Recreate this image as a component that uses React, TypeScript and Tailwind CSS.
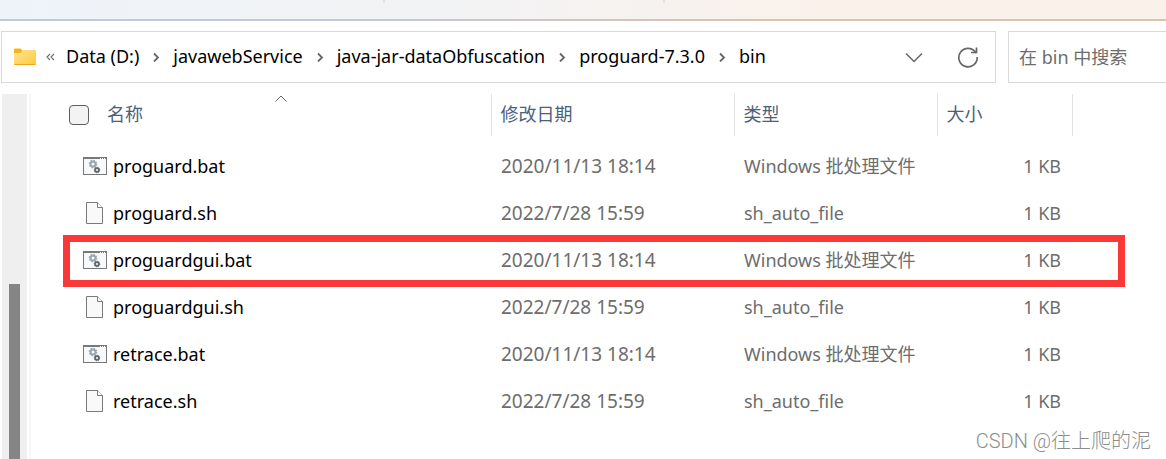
import { useState } from 'react';

type FileKind = 'bat' | 'sh';

interface FileRow {
  name: string;
  kind: FileKind;
  modified: string;
  size: string;
  marked?: boolean;
}

const PATH = ['Data (D:)', 'javawebService', 'java-jar-dataObfuscation', 'proguard-7.3.0', 'bin'];

const FILES: FileRow[] = [
  { name: 'proguard.bat', kind: 'bat', modified: '2020/11/13 18:14', size: '1 KB' },
  { name: 'proguard.sh', kind: 'sh', modified: '2022/7/28 15:59', size: '1 KB' },
  { name: 'proguardgui.bat', kind: 'bat', modified: '2020/11/13 18:14', size: '1 KB', marked: true },
  { name: 'proguardgui.sh', kind: 'sh', modified: '2022/7/28 15:59', size: '1 KB' },
  { name: 'retrace.bat', kind: 'bat', modified: '2020/11/13 18:14', size: '1 KB' },
  { name: 'retrace.sh', kind: 'sh', modified: '2022/7/28 15:59', size: '1 KB' },
];

const TYPE_LABEL: Record<FileKind, string> = {
  bat: 'Windows 批处理文件',
  sh: 'sh_auto_file',
};

function FolderIcon() {
  return (
    <svg width="22" height="18" viewBox="0 0 22 18" className="shrink-0">
      <defs>
        <linearGradient id="folder" x1="0" y1="0" x2="1" y2="1">
          <stop offset="0" stopColor="#ffe599" />
          <stop offset="1" stopColor="#ffc937" />
        </linearGradient>
      </defs>
      <path d="M0 1.5Q0 0.5 1 0.5H6.5L8.5 2.5H21Q22 2.5 22 3.5V8H0z" fill="#f7b51c" />
      <path d="M0 5H6.5L8.5 2.5H21Q22 2.5 22 3.5V16Q22 17 21 17H1Q0 17 0 16z" fill="url(#folder)" />
      <path d="M0.5 16.5H21.5" stroke="#e9a51d" />
    </svg>
  );
}

function BatIcon() {
  return (
    <svg width="24" height="18" viewBox="0 0 24 18">
      <rect x="0.5" y="0.5" width="23" height="17" fill="#f8f9fa" stroke="#787878" />
      <path d="M0 1H24" stroke="#787878" strokeWidth="2" />
      <path d="M17 1.5h1M19 1.5h1M21 1.5h1" stroke="#fff" />
      <circle cx="10" cy="7" r="2.5" fill="none" stroke="#9ba5ae" strokeWidth="2" />
      <circle cx="10" cy="7" r="3.7" fill="none" stroke="#9ba5ae" strokeWidth="1.2" strokeDasharray="1.5 1.4" />
      <circle cx="14" cy="13" r="1.9" fill="none" stroke="#5c666d" strokeWidth="1.7" />
      <circle cx="14" cy="13" r="2.8" fill="none" stroke="#5c666d" strokeWidth="1" strokeDasharray="1.2 1" />
    </svg>
  );
}

function PageIcon() {
  return (
    <svg width="18" height="22" viewBox="0 0 18 22">
      <path d="M0.5 0.5H11.5L16.5 5.5V21.5H0.5z" fill="#f9f9f9" stroke="#7a7a7a" />
      <path d="M11.5 0.5V5.5H16.5" fill="#fff" stroke="#7a7a7a" />
    </svg>
  );
}

function Crumb({ label, last }: { label: string; last: boolean }) {
  return (
    <li className="flex items-center">
      <a href="#" className="text-black">{label}</a>
      {!last && (
        <svg width="34" height="12" viewBox="0 0 34 12" fill="none" stroke="#666" strokeWidth="1.8">
          <path d="M15 3.5L19 7.5L15 11.5" />
        </svg>
      )}
    </li>
  );
}

export default function App() {
  const [allChecked, setAllChecked] = useState(false);
  const [query, setQuery] = useState('');

  return (
    <div className="relative flex min-h-screen flex-col overflow-hidden bg-white font-['Noto_Sans','Noto_Sans_CJK_SC',sans-serif] text-[18px] leading-6">
      {/* bottom edge of the command bar */}
      <div className="flex h-[21px] flex-col bg-linear-to-r from-[#eef3fa] via-[#f3f3f4] via-40% to-[#faf1eb] to-70%">
        <div className="flex flex-1 items-start">
          <div className="h-[3px] w-[33%] border-r-2 border-[#e2e4e7]" />
          <div className="h-[3px] w-[24%] border-r-2 border-[#e8e3df]" />
        </div>
        <div className="h-[2px] bg-linear-to-r from-[#c1c8d8] from-30% to-[#dbc3b0] to-65%" />
      </div>

      <header className="mt-[10px] ml-px flex gap-3">
        <nav aria-label="路径" className="flex h-[52px] min-w-0 flex-1 items-center border border-[#d9d9d9] pl-3">
          <FolderIcon />
          <svg width="30" height="10" viewBox="0 0 30 10" fill="none" stroke="#6b6b6b" strokeWidth="1.1">
            <path d="M14 2L11 5L14 8M18 2L15 5L18 8" />
          </svg>
          <ol className="flex flex-1 items-center pb-[2px] whitespace-nowrap">
            {PATH.map((label, i) => (
              <Crumb key={label} label={label} last={i === PATH.length - 1} />
            ))}
          </ol>
          <button type="button" aria-label="以前的位置" className="flex w-14 justify-center">
            <svg width="18" height="11" viewBox="0 0 18 11" fill="none" stroke="#666" strokeWidth="1.5">
              <path d="M1 1.5L9 9.5L17 1.5" />
            </svg>
          </button>
          <button type="button" aria-label="刷新" className="mr-px flex w-[52px] justify-center">
            <svg width="22" height="22" viewBox="0 0 22 22" fill="none" stroke="#666" strokeWidth="1.7">
              <path d="M19 7A9.2 9.2 0 1 0 20.2 11" />
              <path d="M19.5 1.5V6.5H14" />
            </svg>
          </button>
        </nav>
        <input
          type="search"
          aria-label="搜索"
          placeholder="在 bin 中搜索"
          value={query}
          onChange={(e) => setQuery(e.target.value)}
          className="h-[52px] w-[158px] border border-r-0 border-[#d9d9d9] pl-[10px] placeholder:text-[#6d6d6d] focus:outline-none"
        />
      </header>

      <div className="mt-[11px] flex flex-1">
        {/* navigation pane scrollbar */}
        <div className="ml-[2px] flex w-[25px] flex-col items-center bg-[#efefef] pt-[190px]">
          <div className="w-[11px] flex-1 bg-[#858585]" />
        </div>
        <div className="ml-[2px] w-[2px] bg-[#f6f6f6]" />

        <main className="ml-8 mr-[41px] flex-1">
          <table className="w-full table-fixed text-left">
            <colgroup>
              <col />
              <col className="w-[243px]" />
              <col className="w-[203px]" />
              <col className="w-[135px]" />
              <col className="w-[53px]" />
            </colgroup>
            <thead className="text-[#4c607a]">
              <tr className="h-[42px]">
                <th className="relative border-r border-[#e2e2e2] p-0 pl-[6px] font-normal">
                  <label className="flex items-center gap-[18px]">
                    <input
                      type="checkbox"
                      checked={allChecked}
                      onChange={(e) => setAllChecked(e.target.checked)}
                      className="size-5 appearance-none rounded-[4px] border border-[#5f5f5f] bg-[#f3f3f3] checked:bg-[#0067c0]"
                    />
                    <span className="pb-[2px]">名称</span>
                  </label>
                  <svg width="12" height="7" viewBox="0 0 12 7" fill="none" stroke="#666" className="absolute top-px right-0 left-2 mx-auto">
                    <path d="M0.5 6.5L6 1L11.5 6.5" />
                  </svg>
                </th>
                <th className="border-r border-[#e2e2e2] p-0 pb-[2px] pl-[9px] font-normal">修改日期</th>
                <th className="border-r border-[#e2e2e2] p-0 pb-[2px] pl-[9px] font-normal">类型</th>
                <th className="border-r border-[#e2e2e2] p-0 pb-[2px] pl-[9px] font-normal">大小</th>
                <td />
              </tr>
            </thead>
            <tbody className="text-[#6d6d6d] before:block before:h-[6px]">
              {FILES.map((file) => (
                <tr key={file.name} className="relative h-[47px]">
                  <td className="p-0 pl-5">
                    <div className="flex items-center gap-[6px] text-black">
                      <span className="flex w-6 justify-center">
                        {file.kind === 'bat' ? <BatIcon /> : <PageIcon />}
                      </span>
                      {file.name}
                    </div>
                    {file.marked && (
                      <div className="pointer-events-none absolute inset-x-0 -top-px -bottom-1 border-[7px] border-[#fb3838]" />
                    )}
                  </td>
                  <td className="p-0 pl-[10px] text-[19px]">{file.modified}</td>
                  <td className="p-0 pl-[10px]">{TYPE_LABEL[file.kind]}</td>
                  <td className="p-0 pr-[11px] text-right">{file.size}</td>
                  <td />
                </tr>
              ))}
            </tbody>
          </table>
        </main>
      </div>

      <div className="absolute right-[15px] bottom-[6px] font-['Roboto','Noto_Sans_CJK_SC',sans-serif] text-[20px] font-light text-[#8c8c8c]">
        CSDN @往上爬的泥
      </div>
    </div>
  );
}
